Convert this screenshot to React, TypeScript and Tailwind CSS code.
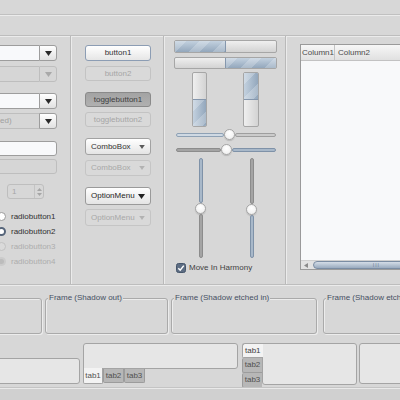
import React from "react"

function Arrow({ c = "#2e2e2e", w = 7, h = 5 }: { c?: string; w?: number; h?: number }) {
  return (
    <svg width={w} height={h} viewBox="0 0 7 5" className="shrink-0">
      <path d="M0 0H7L3.5 5Z" fill={c} />
    </svg>
  )
}

const STRIPE_H =
  "bg-[repeating-linear-gradient(135deg,rgba(255,255,255,0.22)_0px,rgba(255,255,255,0.22)_8px,rgba(255,255,255,0)_8px,rgba(255,255,255,0)_17px),linear-gradient(#c3d1df,#93a7bc)]"
const STRIPE_V =
  "bg-[repeating-linear-gradient(135deg,rgba(255,255,255,0.22)_0px,rgba(255,255,255,0.22)_8px,rgba(255,255,255,0)_8px,rgba(255,255,255,0)_17px),linear-gradient(90deg,#c3d1df,#93a7bc)]"

function EntryCombo({
  cls = "",
  entryDisabled = false,
  buttonDisabled = false,
  text = "",
}: {
  cls?: string
  entryDisabled?: boolean
  buttonDisabled?: boolean
  text?: string
}) {
  return (
    <div className={`flex h-[16px] w-[70px] -ml-[13px] shrink-0 ${cls}`}>
      <div
        className={`flex-1 flex items-center pl-[12px] border border-r-0 rounded-l-[3px] ${
          entryDisabled ? "bg-[#d6d6d6] border-[#bebebe] text-[#a0a0a0]" : "bg-[#f8f9fb] border-[#9d9d9d]"
        }`}
      >
        {text}
      </div>
      <div
        className={`w-[18px] flex items-center justify-center border rounded-r-[3px] ${
          buttonDisabled ? "bg-[#d6d6d6] border-[#bebebe]" : "bg-[linear-gradient(#ffffff,#e1e1e1)] border-[#9d9d9d]"
        }`}
      >
        <Arrow c={buttonDisabled ? "#a9a9a9" : "#2a2a2a"} />
      </div>
    </div>
  )
}

function Radio({ label, kind }: { label: string; kind: "off" | "on" | "dis" | "dison" }) {
  const circle =
    kind === "off"
      ? "bg-white border border-[#9a9a9a]"
      : kind === "on"
      ? "bg-white border-2 border-[#56657a]"
      : kind === "dis"
      ? "bg-[#dadada] border border-[#c2c2c2]"
      : "bg-[#bcbcbc] border-2 border-[#cbcbcb]"
  const txt = kind === "off" || kind === "on" ? "text-[#303030]" : "text-[#adadad]"
  return (
    <div className="flex items-center h-[15px] -ml-[3px] gap-[5px] shrink-0">
      <div className={`w-[9px] h-[9px] rounded-full shrink-0 ${circle}`} />
      <span className={txt}>{label}</span>
    </div>
  )
}

function Btn({ label, kind, cls = "" }: { label: string; kind: "def" | "dis" | "pressed"; cls?: string }) {
  const style =
    kind === "def"
      ? "bg-[linear-gradient(#ffffff,#e6e6e6)] border-[#8c9db4] text-[#333333]"
      : kind === "pressed"
      ? "bg-[linear-gradient(#a3a3a3,#b0b0b0)] border-[#8a8a8a] text-[#404040]"
      : "bg-[#d9d9d9] border-[#c3c3c3] text-[#a6a6a6]"
  return (
    <div className={`ml-[14px] w-[66px] flex items-center justify-center border rounded-[3px] shrink-0 ${style} ${cls}`}>
      {label}
    </div>
  )
}

function Combo({ label, kind, cls = "" }: { label: string; kind: "combo" | "option" | "dis"; cls?: string }) {
  const style =
    kind === "dis"
      ? "bg-[#d9d9d9] border-[#c5c5c5] text-[#a8a8a8]"
      : kind === "option"
      ? "bg-[linear-gradient(#ffffff,#e4e4e4)] border-[#9a9a9a] text-[#1e1e1e]"
      : "bg-[linear-gradient(#ffffff,#e4e4e4)] border-[#a2a2a2] text-[#333333]"
  const arrow = kind === "dis" ? "#b2b2b2" : kind === "option" ? "#222222" : "#5a5a5a"
  return (
    <div
      className={`ml-[14px] w-[66px] flex items-center justify-between pl-[5px] pr-[5px] border rounded-[3px] shrink-0 ${style} ${cls}`}
    >
      <span>{label}</span>
      <Arrow c={arrow} w={kind === "option" ? 7 : 6} h={kind === "option" ? 5 : 4} />
    </div>
  )
}

function Knob() {
  return (
    <div className="w-[11px] h-[11px] rounded-full bg-[radial-gradient(circle_at_50%_35%,#ffffff,#ececec)] border border-[#a5a5a5] shadow-[0_1px_1px_rgba(0,0,0,0.15)] shrink-0" />
  )
}

const BLUE_TRACK = "bg-[#a8b8c9] border border-[#7f92a8]"
const LIGHTBLUE_TRACK = "bg-[#cfd9e3] border border-[#8ea1b5]"
const GRAY_TRACK = "bg-[#a4a4a4] border border-[#8c8c8c]"
const LIGHTGRAY_TRACK = "bg-[#cbcbcb] border border-[#9e9e9e]"

function Frame({ w, label, cls = "" }: { w: string; label?: string; cls?: string }) {
  return (
    <div
      className={`relative h-[36px] shrink-0 border border-[#aaaaaa] rounded-[3px] shadow-[inset_1px_1px_0_#ececec,1px_1px_0_#ececec] ${w} ${cls}`}
    >
      {label && (
        <span className="absolute -top-[5px] left-[2px] px-[1px] bg-[#d7d7d7] text-[#465063] whitespace-nowrap">
          {label}
        </span>
      )}
    </div>
  )
}

export default function App() {
  return (
    <div className="w-[400px] h-[400px] overflow-hidden bg-[#d7d7d7] font-['Liberation_Sans',Arial,sans-serif] text-[8px] leading-none text-[#404040] flex flex-col">
      <div className="h-[15px] shrink-0 border-b border-[#c0c0c0] shadow-[0_1px_0_#ebebeb]" />
      <div className="h-[21px] shrink-0 border-b border-[#bdbdbd] shadow-[0_1px_0_#ebebeb]" />

      <div className="h-[249px] shrink-0 flex border-b border-[#bdbdbd] shadow-[0_1px_0_#ebebeb]">
        {/* column 1 */}
        <div className="w-[71px] shrink-0 flex flex-col pt-[9px] overflow-hidden border-r border-[#b9b9b9] shadow-[1px_0_0_#ebebeb]">
          <EntryCombo />
          <EntryCombo cls="mt-[5px]" entryDisabled buttonDisabled />
          <EntryCombo cls="mt-[11px]" />
          <EntryCombo cls="mt-[4px]" entryDisabled text="ed)" />
          <div className="mt-[12px] h-[15px] w-[70px] -ml-[13px] shrink-0 bg-[#f8f9fb] border border-[#9d9d9d] rounded-[3px]" />
          <div className="mt-[3px] h-[15px] w-[70px] -ml-[13px] shrink-0 bg-[#d6d6d6] border border-[#bebebe] rounded-[3px]" />
          <div className="mt-[10px] ml-[7px] h-[15px] w-[37px] shrink-0 flex border border-[#bebebe] rounded-[3px] text-[#a6a6a6]">
            <div className="flex-1 flex items-center pl-[4px]">1</div>
            <div className="w-[9px] flex flex-col items-center justify-center gap-[2px] border-l border-[#c4c4c4]">
              <svg width="5" height="3" viewBox="0 0 5 3">
                <path d="M0 3H5L2.5 0Z" fill="#a6a6a6" />
              </svg>
              <svg width="5" height="3" viewBox="0 0 5 3">
                <path d="M0 0H5L2.5 3Z" fill="#a6a6a6" />
              </svg>
            </div>
          </div>
          <div className="mt-[10px] flex flex-col">
            <Radio label="radiobutton1" kind="off" />
            <Radio label="radiobutton2" kind="on" />
            <Radio label="radiobutton3" kind="dis" />
            <Radio label="radiobutton4" kind="dison" />
          </div>
        </div>

        {/* column 2 */}
        <div className="w-[93px] shrink-0 flex flex-col pt-[9px] border-r border-[#b9b9b9] shadow-[1px_0_0_#ebebeb]">
          <Btn label="button1" kind="def" cls="h-[16px]" />
          <Btn label="button2" kind="dis" cls="h-[15px] mt-[5px]" />
          <Btn label="togglebutton1" kind="pressed" cls="h-[15px] mt-[11px]" />
          <Btn label="togglebutton2" kind="dis" cls="h-[15px] mt-[5px]" />
          <Combo label="ComboBox" kind="combo" cls="h-[17px] mt-[11px]" />
          <Combo label="ComboBox" kind="dis" cls="h-[16px] mt-[5px]" />
          <Combo label="OptionMenu" kind="option" cls="h-[18px] mt-[11px]" />
          <Combo label="OptionMenu" kind="dis" cls="h-[17px] mt-[4px]" />
        </div>

        {/* column 3 */}
        <div className="w-[122px] shrink-0 flex flex-col pt-[4px] border-r border-[#b9b9b9] shadow-[1px_0_0_#ebebeb]">
          <div className="ml-[10px] w-[103px] h-[13px] shrink-0 flex border border-[#a6a6a6] rounded-[2px] bg-[linear-gradient(#efefef,#d3d3d3)] overflow-hidden">
            <div className={`w-[51px] border-r border-[#8597ad] ${STRIPE_H}`} />
          </div>
          <div className="mt-[4px] ml-[10px] w-[103px] h-[12px] shrink-0 flex justify-end border border-[#a6a6a6] rounded-[2px] bg-[linear-gradient(#efefef,#d3d3d3)] overflow-hidden">
            <div className={`w-[51px] border-l border-[#8597ad] ${STRIPE_H}`} />
          </div>
          <div className="mt-[3px] h-[55px] shrink-0 flex">
            <div className="ml-[28px] w-[15px] flex flex-col border border-[#a6a6a6] rounded-[2px] bg-[linear-gradient(90deg,#efefef,#d3d3d3)] overflow-hidden">
              <div className="flex-1" />
              <div className={`h-[27px] border-t border-[#8597ad] ${STRIPE_V}`} />
            </div>
            <div className="ml-[36px] w-[16px] flex flex-col border border-[#a6a6a6] rounded-[2px] bg-[linear-gradient(90deg,#efefef,#d3d3d3)] overflow-hidden">
              <div className={`h-[27px] border-b border-[#8597ad] ${STRIPE_V}`} />
            </div>
          </div>
          <div className="mt-[2px] ml-[12px] w-[100px] h-[11px] shrink-0 flex items-center">
            <div className={`w-[48px] h-[4px] rounded-full ${LIGHTBLUE_TRACK}`} />
            <Knob />
            <div className={`flex-1 h-[4px] rounded-full ${LIGHTGRAY_TRACK}`} />
          </div>
          <div className="mt-[4px] ml-[12px] w-[100px] h-[11px] shrink-0 flex items-center">
            <div className={`w-[45px] h-[4px] rounded-full ${GRAY_TRACK}`} />
            <Knob />
            <div className={`flex-1 h-[4px] rounded-full ${BLUE_TRACK}`} />
          </div>
          <div className="mt-[3px] h-[100px] shrink-0 flex">
            <div className="ml-[31px] w-[11px] flex flex-col items-center">
              <div className={`h-[45px] w-[4px] rounded-full ${BLUE_TRACK}`} />
              <Knob />
              <div className={`flex-1 w-[4px] rounded-full ${GRAY_TRACK}`} />
            </div>
            <div className="ml-[40px] w-[11px] flex flex-col items-center">
              <div className={`h-[46px] w-[4px] rounded-full ${GRAY_TRACK}`} />
              <Knob />
              <div className={`flex-1 w-[4px] rounded-full ${BLUE_TRACK}`} />
            </div>
          </div>
          <div className="mt-[5px] ml-[12px] h-[10px] shrink-0 flex items-center gap-[3px]">
            <svg width="10" height="10" viewBox="0 0 10 10" className="shrink-0">
              <rect x="0.5" y="0.5" width="9" height="9" rx="2" fill="#5d6d83" stroke="#46566b" />
              <path d="M2.3 5.2L4.2 7.2L7.8 2.6" stroke="#ffffff" strokeWidth="1.5" fill="none" />
            </svg>
            <span className="text-[#424242]">Move In Harmony</span>
          </div>
        </div>

        {/* column 4 */}
        <div className="flex-1 overflow-hidden pt-[8px]">
          <div className="ml-[14px] w-[120px] h-[226px] flex flex-col border border-[#9a9a9a] bg-[#f8f9fa]">
            <div className="h-[16px] shrink-0 flex border-b border-[#c2c2c2] bg-[linear-gradient(#f7f7f7,#e0e0e0)] text-[#4a4a4a]">
              <div className="w-[34px] flex items-center pl-[1px] border-r border-[#c4c4c4]">Column1</div>
              <div className="flex items-center pl-[3px]">Column2</div>
            </div>
            <div className="flex-1" />
            <div className="h-[9px] shrink-0 flex items-center bg-[#e2e2e2] border-t border-[#d0d0d0]">
              <svg width="4" height="5" viewBox="0 0 4 5" className="ml-[3px] shrink-0">
                <path d="M4 0V5L0 2.5Z" fill="#8a8a8a" />
              </svg>
              <div className="ml-[5px] flex-1 h-[8px] rounded-l-full border border-[#7b8da3] bg-[linear-gradient(#d4dde7,#9aabbf)] flex items-center justify-end pr-[38px]">
                <span className="text-[5px] tracking-[1px] text-[#6d7e93]">III</span>
              </div>
            </div>
          </div>
        </div>
      </div>

      {/* frames */}
      <div className="mt-[13px] h-[36px] shrink-0 flex">
        <Frame w="w-[50px]" cls="-ml-[8px]" />
        <Frame w="w-[123px]" cls="ml-[3px]" label="Frame (Shadow out)" />
        <Frame w="w-[146px]" cls="ml-[3px]" label="Frame (Shadow etched in)" />
        <Frame w="w-[120px]" cls="ml-[6px]" label="Frame (Shadow etched out)" />
      </div>

      {/* notebooks */}
      <div className="mt-[9px] h-[45px] shrink-0 flex items-start">
        <div className="-ml-[8px] mt-[15px] w-[88px] h-[26px] shrink-0 bg-[#e6e6e6] border border-[#a4a4a4] rounded-[3px]" />
        <div className="ml-[3px] w-[155px] shrink-0 flex flex-col">
          <div className="h-[26px] bg-[#e6e6e6] border border-[#a4a4a4] rounded-t-[3px] rounded-br-[3px]" />
          <div className="flex h-[15px]">
            <div className="w-[20px] -mt-px h-[16px] flex items-center justify-center bg-[#f3f3f3] border border-t-0 border-[#a4a4a4] rounded-b-[2px] text-[#505050]">
              tab1
            </div>
            <div className="w-[21px] h-[14px] flex items-center justify-center bg-[#b7b7b7] border border-t-0 border-[#9c9c9c] rounded-b-[2px] text-[#505050]">
              tab2
            </div>
            <div className="w-[21px] h-[14px] flex items-center justify-center bg-[#b7b7b7] border border-t-0 border-[#9c9c9c] rounded-b-[2px] text-[#505050]">
              tab3
            </div>
          </div>
        </div>
        <div className="ml-[4px] w-[115px] shrink-0 flex">
          <div className="w-[20px] flex flex-col shrink-0">
            <div className="h-[15px] -mr-px flex items-center pl-[2px] bg-[#f3f3f3] border border-r-0 border-[#a4a4a4] rounded-tl-[3px] rounded-bl-[2px] text-[#404040] relative">
              tab1
            </div>
            <div className="h-[15px] flex items-center justify-center bg-[#b7b7b7] border border-r-0 border-t-0 border-[#9c9c9c] rounded-l-[2px] text-[#505050]">
              tab2
            </div>
            <div className="h-[15px] flex items-center justify-center bg-[#b7b7b7] border border-r-0 border-t-0 border-[#9c9c9c] rounded-l-[2px] text-[#505050]">
              tab3
            </div>
          </div>
          <div className="flex-1 h-[42px] bg-[#e6e6e6] border border-[#a4a4a4] rounded-r-[3px] rounded-bl-[3px]" />
        </div>
        <div className="ml-[2px] w-[60px] h-[41px] shrink-0 bg-[#e6e6e6] border border-[#a4a4a4] rounded-[3px]" />
      </div>

      <div className="flex-1 bg-[#d0d0d0] border-t border-[#e9e9e9] shadow-[0_-1px_0_#c4c4c4]" />
    </div>
  )
}
